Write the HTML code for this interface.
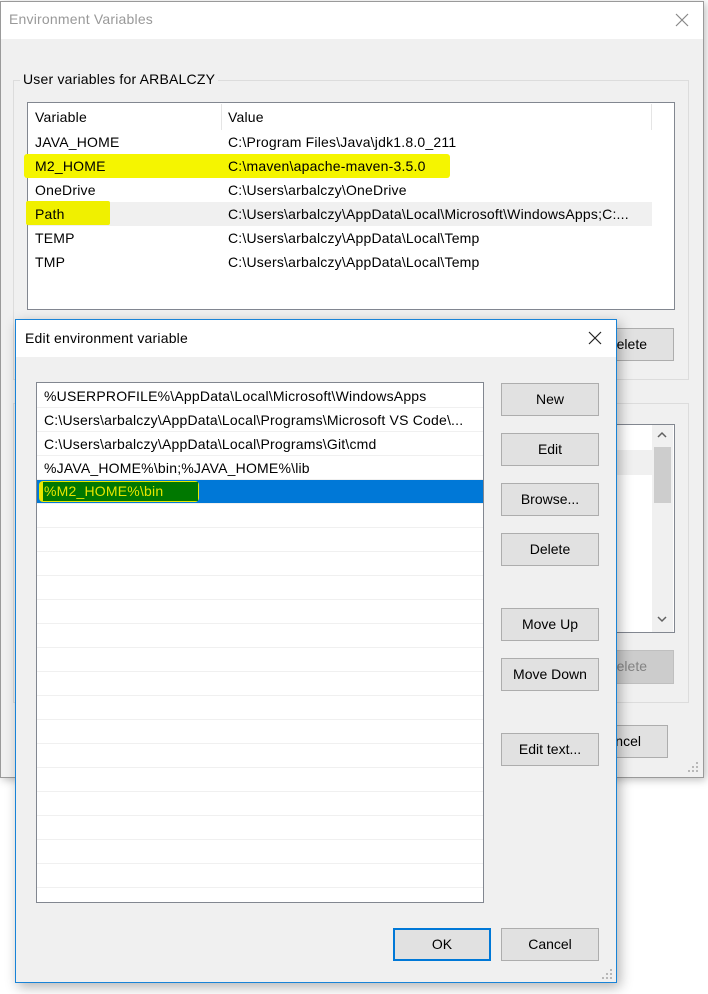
<!DOCTYPE html>
<html><head><style>
*{box-sizing:border-box;margin:0;padding:0}
body{width:708px;height:994px;background:#fff;position:relative;overflow:hidden;font-family:"Liberation Sans",sans-serif;font-size:14px;color:#000}
.a{position:absolute}
.btn{position:absolute;background:#e1e1e1;border:1px solid #adadad;text-align:center;line-height:30px;font-size:14px}
.t{position:absolute;white-space:nowrap;letter-spacing:0.2px}
</style></head><body>
<div class="a" style="left:0;top:1px;width:704px;height:777px;background:#f0f0f0;border:1px solid #9a9a9a;box-shadow:2px 2px 8px rgba(0,0,0,.25)"></div>
<div class="a" style="left:1px;top:2px;width:702px;height:37px;background:#fff"></div>
<div class="t" style="left:9px;top:11px;color:#999;font-size:14px">Environment Variables</div>
<svg class="a" style="left:675px;top:13px" width="14" height="14"><path d="M1 1L13 13M13 1L1 13" stroke="#888" stroke-width="1.2"/></svg>
<div class="a" style="left:13px;top:80px;width:676px;height:300px;border:1px solid #dcdcdc"></div>
<div class="t" style="left:20px;top:71px;background:#f0f0f0;padding:0 3px;font-size:14px">User variables for ARBALCZY</div>
<div class="a" style="left:27px;top:102px;width:648px;height:208px;background:#fff;border:1px solid #828790"></div>
<div class="a" style="left:221px;top:104px;width:1px;height:26px;background:#e5e5e5"></div>
<div class="a" style="left:651px;top:104px;width:1px;height:26px;background:#e5e5e5"></div>
<div class="t" style="left:35px;top:109px">Variable</div>
<div class="t" style="left:228px;top:109px">Value</div>
<div class="a" style="left:28px;top:202px;width:624px;height:24px;background:#f0f0f0"></div>
<div class="a" style="left:24px;top:154px;width:426px;height:24px;background:#f5f500;border-radius:3px"></div>
<div class="a" style="left:26px;top:201px;width:84px;height:24px;background:#f0f000;border-radius:2px"></div>
<div class="t" style="left:35px;top:134px">JAVA_HOME</div><div class="t" style="left:228px;top:134px">C:\Program Files\Java\jdk1.8.0_211</div>
<div class="t" style="left:35px;top:158px">M2_HOME</div><div class="t" style="left:228px;top:158px">C:\maven\apache-maven-3.5.0</div>
<div class="t" style="left:35px;top:182px">OneDrive</div><div class="t" style="left:228px;top:182px">C:\Users\arbalczy\OneDrive</div>
<div class="t" style="left:35px;top:206px">Path</div><div class="t" style="left:228px;top:206px">C:\Users\arbalczy\AppData\Local\Microsoft\WindowsApps;C:...</div>
<div class="t" style="left:35px;top:230px">TEMP</div><div class="t" style="left:228px;top:230px">C:\Users\arbalczy\AppData\Local\Temp</div>
<div class="t" style="left:35px;top:254px">TMP</div><div class="t" style="left:228px;top:254px">C:\Users\arbalczy\AppData\Local\Temp</div>
<div class="btn" style="left:580px;top:328px;width:94px;height:33px;text-align:right;padding-right:26px">Delete</div>
<div class="a" style="left:13px;top:403px;width:676px;height:300px;border:1px solid #dcdcdc"></div>
<div class="a" style="left:560px;top:424px;width:115px;height:209px;background:#fff;border:1px solid #828790"></div>
<div class="a" style="left:561px;top:450px;width:91px;height:25px;background:#f0f0f0"></div>
<div class="a" style="left:652px;top:425px;width:21px;height:207px;background:#f0f0f0"></div>
<div class="a" style="left:654px;top:447px;width:17px;height:56px;background:#cdcdcd"></div>
<svg class="a" style="left:656px;top:430px" width="12" height="10"><path d="M2 7L6 3L10 7" fill="none" stroke="#606060" stroke-width="1.5"/></svg>
<svg class="a" style="left:656px;top:614px" width="12" height="10"><path d="M2 3L6 7L10 3" fill="none" stroke="#606060" stroke-width="1.5"/></svg>
<div class="btn" style="left:580px;top:650px;width:94px;height:34px;background:#cccccc;border-color:#bfbfbf;color:#838383;text-align:right;padding-right:26px">Delete</div>
<div class="btn" style="left:570px;top:725px;width:98px;height:33px;text-align:right;padding-right:26px">Cancel</div>
<svg class="a" style="left:688px;top:762px" width="12" height="12" fill="#b8b8b8"><rect x="8" y="0" width="2" height="2"/><rect x="4" y="4" width="2" height="2"/><rect x="8" y="4" width="2" height="2"/><rect x="0" y="8" width="2" height="2"/><rect x="4" y="8" width="2" height="2"/><rect x="8" y="8" width="2" height="2"/></svg>
<div class="a" style="left:15px;top:319px;width:602px;height:664px;background:#f0f0f0;border:1px solid #1883d7;box-shadow:3px 4px 12px rgba(0,0,0,.3)"></div>
<div class="a" style="left:16px;top:320px;width:600px;height:37px;background:#fff"></div>
<div class="t" style="left:25px;top:330px">Edit environment variable</div>
<svg class="a" style="left:588px;top:331px" width="14" height="14"><path d="M1 1L13 13M13 1L1 13" stroke="#222" stroke-width="1.2"/></svg>
<div class="a" style="left:36px;top:382px;width:448px;height:521px;background:#fff;border:1px solid #828790;overflow:hidden">
<div style="height:521px;background:repeating-linear-gradient(#fff 0,#fff 23px,#f0f0f0 23px,#f0f0f0 24px);background-position:0 1px"></div>
</div>
<div class="a" style="left:37px;top:480px;width:446px;height:23px;background:#0078d7"></div>
<div class="a" style="left:39px;top:481px;width:160px;height:21px;background:#e8e800;border-radius:4px"></div>
<div class="a" style="left:43px;top:482px;width:155px;height:19px;background:#007800"></div>
<div class="t" style="left:44px;top:388px">%USERPROFILE%\AppData\Local\Microsoft\WindowsApps</div>
<div class="t" style="left:44px;top:412px">C:\Users\arbalczy\AppData\Local\Programs\Microsoft VS Code\...</div>
<div class="t" style="left:44px;top:436px">C:\Users\arbalczy\AppData\Local\Programs\Git\cmd</div>
<div class="t" style="left:44px;top:460px">%JAVA_HOME%\bin;%JAVA_HOME%\lib</div>
<div class="t" style="left:44px;top:483px;color:#e6e600">%M2_HOME%\bin</div>
<div class="btn" style="left:501px;top:383px;width:98px;height:33px">New</div>
<div class="btn" style="left:501px;top:433px;width:98px;height:33px">Edit</div>
<div class="btn" style="left:501px;top:483px;width:98px;height:33px">Browse...</div>
<div class="btn" style="left:501px;top:533px;width:98px;height:33px">Delete</div>
<div class="btn" style="left:501px;top:608px;width:98px;height:33px">Move Up</div>
<div class="btn" style="left:501px;top:658px;width:98px;height:33px">Move Down</div>
<div class="btn" style="left:501px;top:733px;width:98px;height:33px">Edit text...</div>
<div class="btn" style="left:393px;top:928px;width:98px;height:33px;border:2px solid #0078d7;line-height:29px">OK</div>
<div class="btn" style="left:501px;top:928px;width:98px;height:33px">Cancel</div>
<svg class="a" style="left:602px;top:969px" width="12" height="12" fill="#b8b8b8"><rect x="8" y="0" width="2" height="2"/><rect x="4" y="4" width="2" height="2"/><rect x="8" y="4" width="2" height="2"/><rect x="0" y="8" width="2" height="2"/><rect x="4" y="8" width="2" height="2"/><rect x="8" y="8" width="2" height="2"/></svg>
</body></html>
